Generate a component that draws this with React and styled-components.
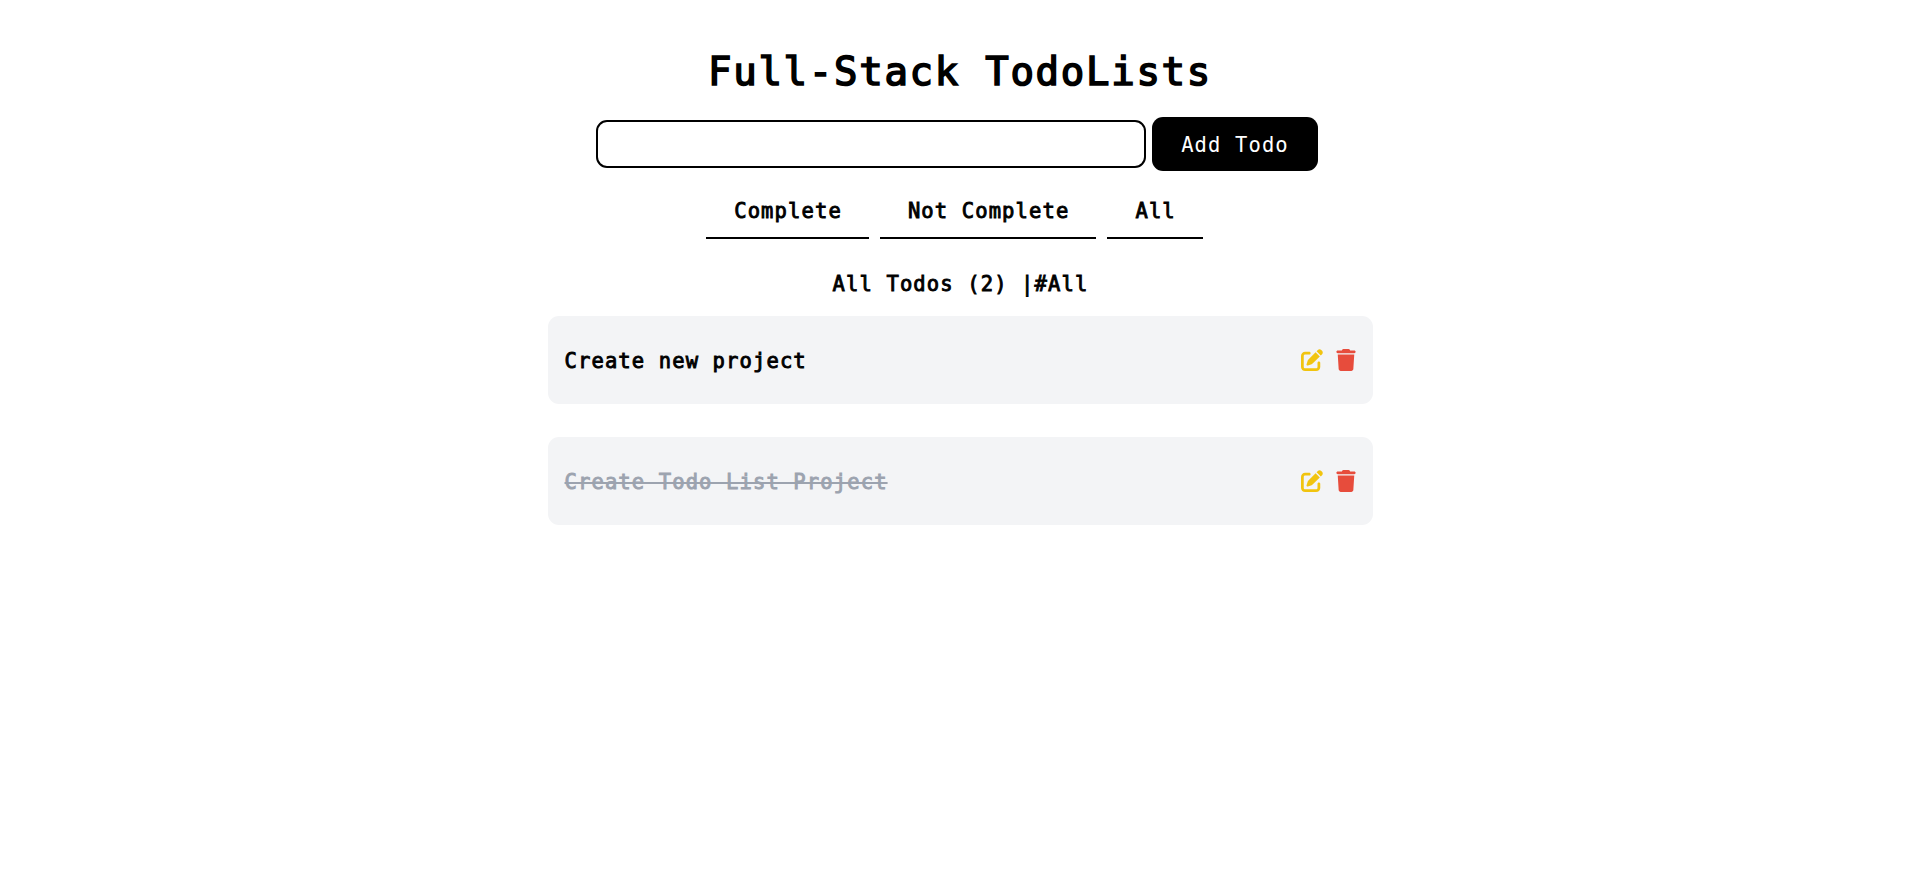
import React from "react";
import styled, { createGlobalStyle } from "styled-components";
import { FaPenToSquare, FaTrash } from "react-icons/fa6";

const GlobalStyle = createGlobalStyle`
  * { box-sizing: border-box; }
  body {
    margin: 0;
    background: #fff;
    color: #000;
    font-family: "DejaVu Sans Mono", monospace;
    font-size: 20.5px;
    font-weight: 400;
    letter-spacing: 1.12px;
    line-height: 32px;
    -webkit-text-stroke-width: 0.9px;
  }
`;

const Page = styled.main`
  width: 825px;
  margin: 0 auto;
  padding-top: 42px;
  display: flex;
  flex-direction: column;
  align-items: center;
`;

const Title = styled.h1`
  margin: 0;
  font-size: 39px;
  font-weight: 400;
  line-height: 60px;
  letter-spacing: 1.72px;
  -webkit-text-stroke-width: 1.6px;
  white-space: nowrap;
`;

const TodoForm = styled.form`
  display: flex;
  align-items: center;
  gap: 6px;
  margin: 15px 7px 0 0;
`;

const TodoInput = styled.input`
  width: 550px;
  height: 48px;
  padding: 0 12px;
  border: 2px solid #000;
  border-radius: 11px;
  background: #fff;
  font: inherit;
  outline: none;
`;

const AddButton = styled.button`
  width: 166px;
  height: 54px;
  padding: 1px 0 0 1px;
  border: 0;
  border-radius: 11px;
  background: #000;
  color: #fff;
  font: inherit;
  letter-spacing: inherit;
  -webkit-text-stroke-width: 0;
`;

const Filters = styled.nav`
  display: flex;
  gap: 11px;
  margin: 23px 11px 0 0;
`;

const FilterTab = styled.button`
  height: 45px;
  padding: 0 27px 10px 28px;
  border: 0;
  border-bottom: 2px solid #000;
  background: none;
  color: inherit;
  font: inherit;
  letter-spacing: inherit;
  white-space: nowrap;
`;

const Summary = styled.h2`
  margin: 29px 0 16px;
  padding-left: 1px;
  font-size: inherit;
  font-weight: inherit;
  line-height: 32px;
`;

const TodoList = styled.ul`
  width: 100%;
  margin: 0;
  padding: 0;
  display: flex;
  flex-direction: column;
  gap: 33px;
  list-style: none;
`;

const TodoItem = styled.li`
  display: flex;
  align-items: center;
  justify-content: space-between;
  height: 88px;
  padding: 0 16px 0 17px;
  border-radius: 11px;
  background: #f3f4f6;
`;

const TodoText = styled.span`
  padding-top: 2px;
  color: ${({ $done }) => ($done ? "#9ca3af" : "#000")};
  text-decoration: ${({ $done }) => ($done ? "line-through 2px" : "none")};
`;

const Actions = styled.div`
  display: flex;
  align-items: center;
  gap: 12px;
`;

const IconButton = styled.button`
  display: flex;
  padding: 0;
  border: 0;
  background: none;
  color: ${({ $color }) => $color};

  svg {
    width: auto;
    height: 22px;
  }
`;

const filters = ["Complete", "Not Complete", "All"];
const todos = [
  { text: "Create new project", done: false },
  { text: "Create Todo List Project", done: true },
];

export default function App() {
  return (
    <>
      <GlobalStyle />
      <Page>
        <Title>Full-Stack TodoLists</Title>
        <TodoForm onSubmit={(event) => event.preventDefault()}>
          <TodoInput type="text" />
          <AddButton>Add Todo</AddButton>
        </TodoForm>
        <Filters>
          {filters.map((name) => (
            <FilterTab key={name}>{name}</FilterTab>
          ))}
        </Filters>
        <Summary>All Todos ({todos.length}) |#All</Summary>
        <TodoList>
          {todos.map(({ text, done }) => (
            <TodoItem key={text}>
              <TodoText $done={done}>{text}</TodoText>
              <Actions>
                <IconButton $color="#f1c40f">
                  <FaPenToSquare />
                </IconButton>
                <IconButton $color="#e74c3c">
                  <FaTrash />
                </IconButton>
              </Actions>
            </TodoItem>
          ))}
        </TodoList>
      </Page>
    </>
  );
}
